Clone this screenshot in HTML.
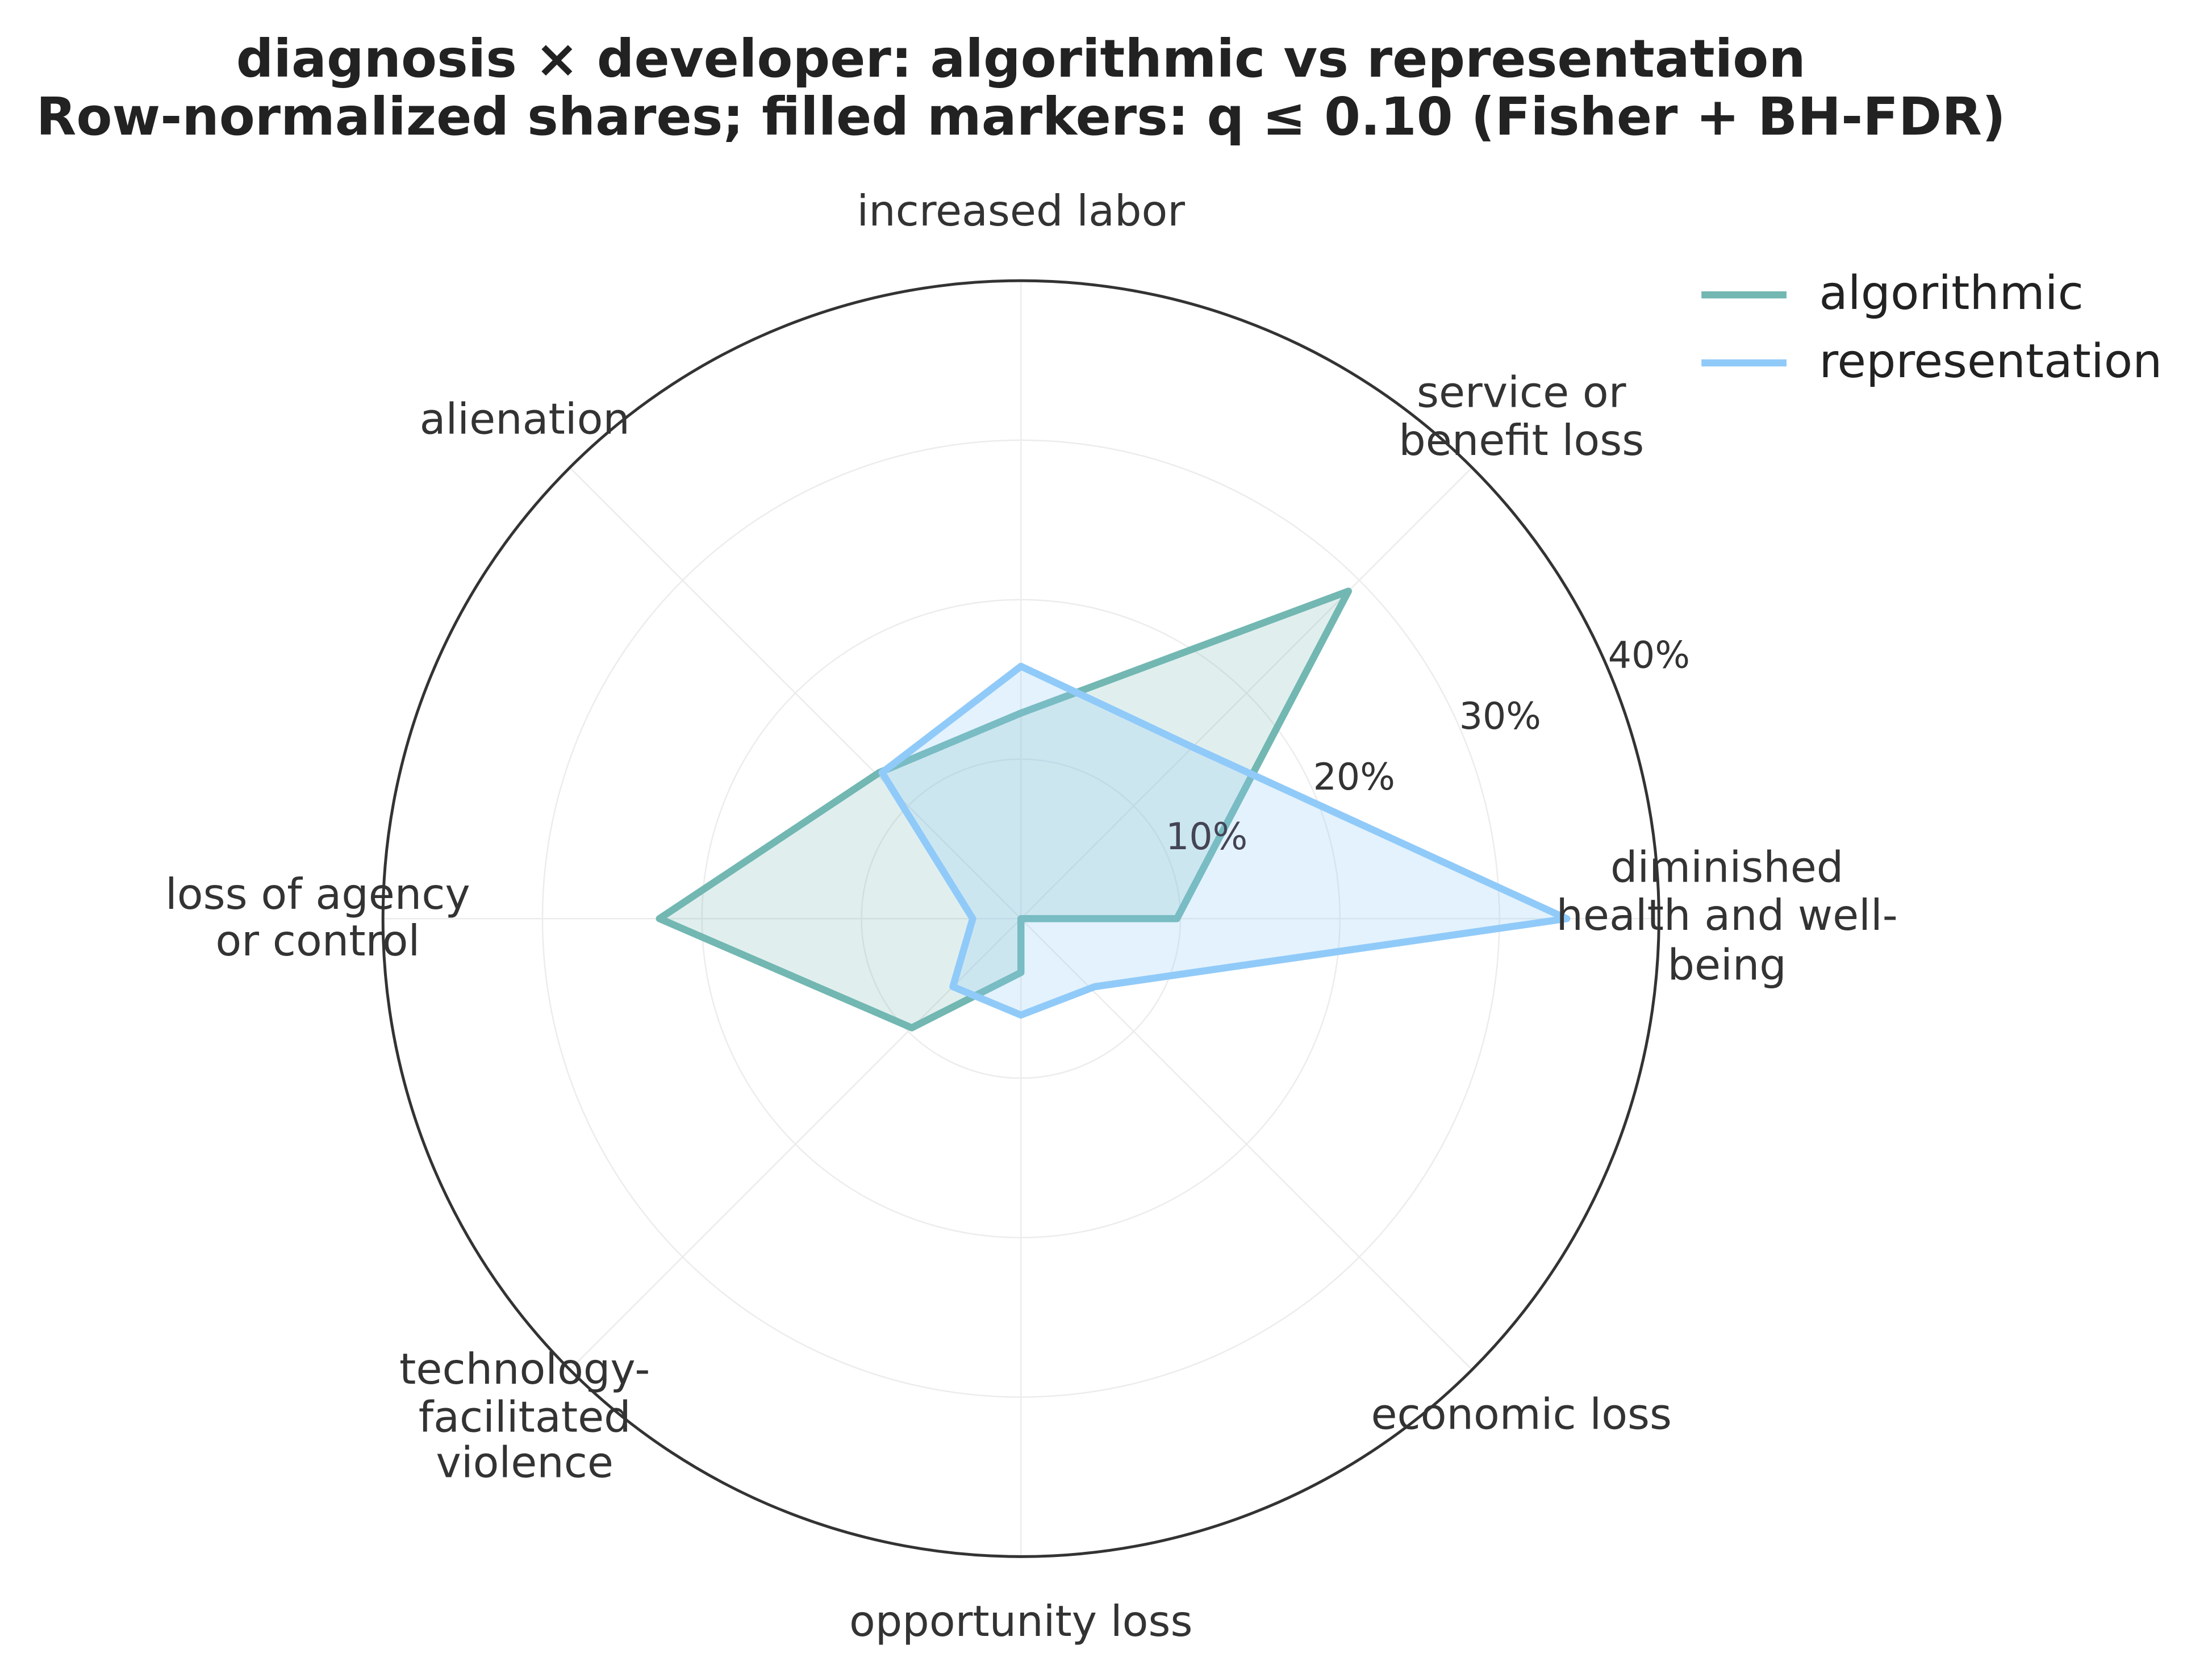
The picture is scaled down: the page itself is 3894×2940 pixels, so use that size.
<!DOCTYPE html>
<html><head><meta charset="utf-8"><style>
html,body{margin:0;padding:0;background:#fff}
svg{display:block}
text{font-family:"DejaVu Sans","Liberation Sans",sans-serif;fill:#333}
</style></head><body>
<svg width="3894" height="2940" viewBox="0 0 1560 1178" xmlns="http://www.w3.org/2000/svg">
<rect width="1560" height="1178" fill="#fff"/>
<g text-anchor="middle" font-weight="bold" font-size="36.8">
<text x="720" y="54" style="fill:#222">diagnosis × developer: algorithmic vs representation</text>
<text x="720" y="95" style="fill:#222">Row-normalized shares; filled markers: q ≤ 0.10 (Fisher + BH-FDR)</text>
</g>
<g fill="none" stroke="#ececec" stroke-width="1">
<circle cx="720" cy="648" r="112.5"/>
<circle cx="720" cy="648" r="225"/>
<circle cx="720" cy="648" r="337.5"/>
<line x1="270" y1="648" x2="1170" y2="648"/>
<line x1="720" y1="198" x2="720" y2="1098"/>
<line x1="402" y1="330" x2="1038" y2="966"/>
<line x1="402" y1="966" x2="1038" y2="330"/>
</g>
<circle cx="720" cy="648" r="450" fill="none" stroke="#333" stroke-width="2"/>
<polygon points="830,648 951,417 720,503 620,545 465,648 643,725 720,686 720,648" fill="#72B7B2" fill-opacity="0.22" stroke="#72B7B2" stroke-width="5" stroke-linejoin="round"/>
<polygon points="1105,648 841,527 720,470 622,545 686,648 672,696 720,716 772,696" fill="#90CAF9" fill-opacity="0.25" stroke="#90CAF9" stroke-width="5" stroke-linejoin="round"/>
<g font-size="26" text-anchor="middle">
<text x="851" y="599" style="fill:#445">10%</text>
<text x="955" y="557">20%</text>
<text x="1058" y="514">30%</text>
<text x="1163" y="471">40%</text>
</g>
<g font-size="30" text-anchor="middle">
<text x="720" y="159">increased labor</text>
<text x="1073" y="287">service or</text>
<text x="1073" y="321">benefit loss</text>
<text x="370" y="306">alienation</text>
<text x="224" y="641">loss of agency</text>
<text x="224" y="674">or control</text>
<text x="1218" y="622">diminished</text>
<text x="1218" y="656">health and well-</text>
<text x="1218" y="691">being</text>
<text x="370" y="976">technology-</text>
<text x="370" y="1010">facilitated</text>
<text x="370" y="1042">violence</text>
<text x="720" y="1154">opportunity loss</text>
<text x="1073" y="1008">economic loss</text>
</g>
<line x1="1200" y1="208" x2="1260" y2="208" stroke="#72B7B2" stroke-width="5"/>
<line x1="1200" y1="256" x2="1260" y2="256" stroke="#90CAF9" stroke-width="5"/>
<g font-size="33">
<text x="1283" y="218" style="fill:#222">algorithmic</text>
<text x="1283" y="266" style="fill:#222">representation</text>
</g>
</svg>
</body></html>
